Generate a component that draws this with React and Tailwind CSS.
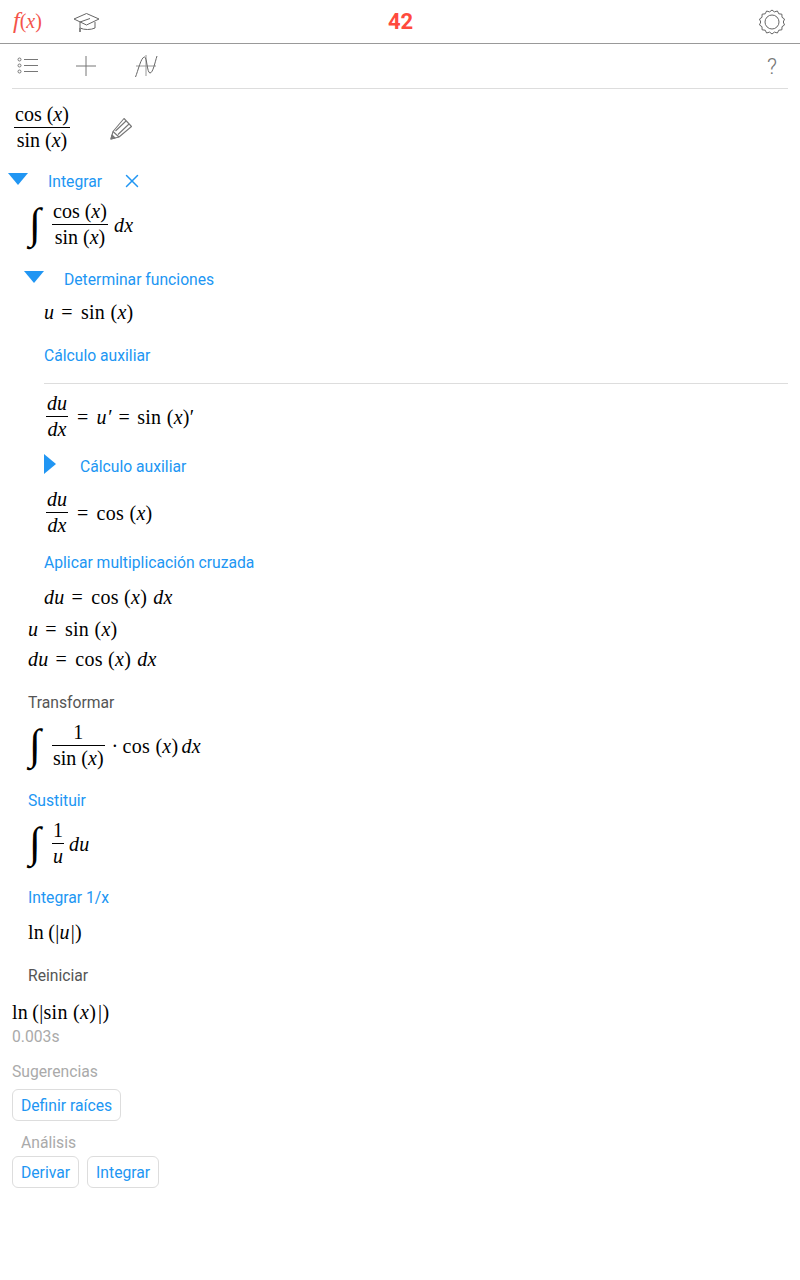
import { X } from "lucide-react";

const I = ({ children, className = "" }) => <i className={`italic ${className}`}>{children}</i>;

const Frac = ({ top, bottom, className = "" }) => (
  <span className={`inline-flex flex-col items-center leading-none tracking-normal ${className}`}>
    <span className="px-px pb-[3px] h-[23px] flex items-end">{top}</span>
    <span className="px-px pt-[2px] h-[26px] w-full text-center border-t border-black whitespace-nowrap">{bottom}</span>
  </span>
);

const Integral = () => (
  <span className="w-[24px] pl-px font-['Liberation_Serif',serif] text-[43px] leading-none -mt-1 italic">∫</span>
);

const CosX = ({ className = "" }) => (
  <span className={`whitespace-nowrap ${className}`}>cos (<I>x</I>)</span>
);
const SinX = ({ className = "" }) => (
  <span className={`whitespace-nowrap ${className}`}>sin (<I>x</I>)</span>
);
const Eq = ({ className = "ml-[7px] mr-[8px]" }) => <span className={className}>=</span>;

const Row = ({ children, className = "" }) => (
  <div className={`flex items-center whitespace-pre font-['Liberation_Serif',serif] text-[20px] tracking-[0.3px] text-black ${className}`}>
    {children}
  </div>
);

const Label = ({ children, className = "" }) => (
  <div className={`h-6 pt-[2px] flex items-center text-[15.7px] text-[#2196f3] ${className}`}>{children}</div>
);

const Muted = ({ children, className = "" }) => (
  <div className={`h-6 pt-[2px] flex items-center text-[15.7px] text-[#aaa] ${className}`}>{children}</div>
);

const Triangle = ({ right }) => (
  <svg width="20" height="20" viewBox="0 0 20 20" className={`shrink-0 ${right ? "-mt-1" : ""}`}>
    {right ? <path d="M0 0 L12 10 L0 20 Z" fill="#2196f3" /> : <path d="M0 2 H20 L10 14 Z" fill="#2196f3" />}
  </svg>
);

const Btn = ({ children }) => (
  <div className="h-[32px] pt-[1px] px-2 flex items-center border border-[#ddd] rounded-md text-[15.7px] text-[#2196f3]">{children}</div>
);

const CapIcon = () => (
  <svg width="30" height="24" viewBox="0 0 30 24" fill="none" stroke="#666" strokeWidth="1">
    <path d="M2 9 L14.5 3.5 L27 9 L14.5 15 Z" />
    <path d="M8 12 V18 C12 20 19 20 23 18 V12" />
    <path d="M8 12 L18 8.5" />
    <rect x="7" y="18" width="2" height="4" fill="#888" stroke="none" />
  </svg>
);

const GearIcon = () => (
  <svg width="26" height="26" viewBox="0 0 26 26" fill="none" stroke="#666" strokeWidth="1">
    <path d="M13 1 L15.4 2.9 L18.4 2 L19.8 4.8 L22.9 5.2 L23 8.3 L25.5 10 L24.3 13 L25.5 16 L23 17.7 L22.9 20.8 L19.8 21.2 L18.4 24 L15.4 23.1 L13 25 L10.6 23.1 L7.6 24 L6.2 21.2 L3.1 20.8 L3 17.7 L0.5 16 L1.7 13 L0.5 10 L3 8.3 L3.1 5.2 L6.2 4.8 L7.6 2 L10.6 2.9 Z" />
    <circle cx="13" cy="13" r="7" />
  </svg>
);

const ListIcon = () => (
  <svg width="22" height="20" viewBox="0 0 22 20" fill="none" stroke="#777" strokeWidth="1">
    <circle cx="2.5" cy="3.5" r="1.5" />
    <circle cx="2.5" cy="9.5" r="1.5" />
    <circle cx="2.5" cy="15.5" r="1.5" />
    <path d="M7 3.5 H21 M7 9.5 H21 M7 15.5 H21" />
  </svg>
);

const PlusIcon = () => (
  <svg width="20" height="20" viewBox="0 0 20 20" stroke="#777" strokeWidth="1">
    <path d="M10 0 V20 M0 10 H20" />
  </svg>
);

const GraphIcon = () => (
  <svg width="24" height="24" viewBox="0 0 24 24" fill="none" stroke="#666" strokeWidth="1">
    <path d="M1 12 H21 M11 1 V22" stroke="#999" />
    <path d="M0.5 23 C3 17 6 3 9.5 3 C12 3 12 19 15 19 C18 19 20 8 22 2" />
  </svg>
);

const PencilIcon = () => (
  <svg width="24" height="24" viewBox="0 0 24 24" fill="none" stroke="#777" strokeWidth="1.1" strokeLinejoin="round">
    <path d="M3 23 L5 15.5 L16 2.5 L23.5 10.5 L11 21 Z" />
    <path d="M7.5 15 L18 5 M10 18.5 L21 8 M5 15.5 L11 21" />
    <path d="M3 23 L4 19 L7 22 Z" fill="#777" />
  </svg>
);

export default function App() {
  return (
    <div className="w-[800px] h-[1280px] bg-white font-['Roboto',sans-serif] overflow-hidden">
      <header className="h-[44px] border-b border-[#999] flex items-center pl-[13px] pr-[15px]">
        <span className="w-[59px] -mt-[3px] font-['Liberation_Serif',serif] text-[#f4534a] text-[20px] whitespace-nowrap">
          <i className="text-[24px]">f</i>(<i>x</i>)
        </span>
        <CapIcon />
        <span className="flex-1 text-center font-bold text-[#ff4a3d] text-[22px] pr-[60px]">42</span>
        <GearIcon />
      </header>

      <div className="mx-3 h-[45px] border-b border-[#ddd] flex items-center">
        <div className="ml-[5px] w-[59px]"><ListIcon /></div>
        <div className="w-[59px] h-5"><PlusIcon /></div>
        <GraphIcon />
        <span className="ml-auto mr-[11px] text-[#777] text-[22px] font-light">?</span>
      </div>

      <Row className="mt-[13px] pl-[14px] h-[52px]">
        <Frac top={<CosX />} bottom={<SinX />} />
        <span className="ml-[38px]"><PencilIcon /></span>
      </Row>

      <div className="mt-[15px] pl-2 flex items-center h-6 gap-5">
        <Triangle />
        <Label>Integrar</Label>
        <X size={22} strokeWidth={1.6} className="-ml-[1px] text-[#2196f3]" />
      </div>

      <div className="pl-7">
        <Row className="mt-[6px] h-[52px]">
          <Integral />
          <Frac top={<CosX />} bottom={<SinX />} />
          <I className="ml-[6px]">dx</I>
        </Row>

        <div className="mt-4 -ml-1 flex items-center h-6 gap-5">
          <Triangle />
          <Label>Determinar funciones</Label>
        </div>

        <div className="pl-4">
          <Row className="mt-[9px] h-6"><I>u</I><Eq /><SinX /></Row>
          <Label className="mt-[19px]">Cálculo auxiliar</Label>
          <div className="mt-4 h-px mr-3 bg-[#ddd]" />
          <Row className="mt-[7px] h-[52px]">
            <Frac className="ml-[2px]" top={<I>du</I>} bottom={<I>dx</I>} />
            <Eq className="ml-[9px] mr-[8px]" /><I>u′</I><Eq className="ml-[7px] mr-[7px]" /><SinX />′
          </Row>
          <div className="mt-[11px] flex items-center h-6 gap-6">
            <Triangle right />
            <Label className="-ml-2">Cálculo auxiliar</Label>
          </div>
          <Row className="mt-[9px] h-[52px]">
            <Frac className="ml-[2px]" top={<I>du</I>} bottom={<I>dx</I>} />
            <Eq className="ml-[9px] mr-[8px]" /><CosX />
          </Row>
          <Label className="mt-[11px]">Aplicar multiplicación cruzada</Label>
          <Row className="mt-[11px] h-6"><I>du</I><Eq /><CosX /><I className="ml-[6px]">dx</I></Row>
        </div>

        <Row className="mt-2 h-6"><I>u</I><Eq /><SinX /></Row>
        <Row className="mt-[6px] h-6"><I>du</I><Eq /><CosX /><I className="ml-[6px]">dx</I></Row>
        <Label className="mt-[19px] !text-[#555]">Transformar</Label>
        <Row className="mt-[6px] h-[52px]">
          <Integral />
          <Frac top="1" bottom={<SinX />} />
          <span className="ml-[7px] mr-[4px]">·</span>
          <CosX />
          <I className="ml-[3px]">dx</I>
        </Row>
        <Label className="mt-4">Sustituir</Label>
        <Row className="mt-[6px] h-[52px]">
          <Integral />
          <Frac top="1" bottom={<I>u</I>} />
          <I className="ml-[5px]">du</I>
        </Row>
        <Label className="mt-[15px]">Integrar 1/x</Label>
        <Row className="mt-[11px] h-6">ln<span className="ml-[4px]">(|</span><I>u</I><span className="ml-px">|)</span></Row>
        <Label className="mt-[19px] !text-[#555]">Reiniciar</Label>
      </div>

      <div className="pl-3">
        <Row className="mt-[13px] h-6">ln<span className="ml-[4px]">(|</span><SinX /><span className="ml-[2px]">|)</span></Row>
        <Muted>0.003s</Muted>
        <Muted className="mt-[11px]">Sugerencias</Muted>
        <div className="mt-[6px] flex"><Btn>Definir raíces</Btn></div>
        <Muted className="mt-[9px] pl-[9px]">Análisis</Muted>
        <div className="mt-[2px] flex gap-2">
          <Btn>Derivar</Btn>
          <Btn>Integrar</Btn>
        </div>
      </div>
    </div>
  );
}
